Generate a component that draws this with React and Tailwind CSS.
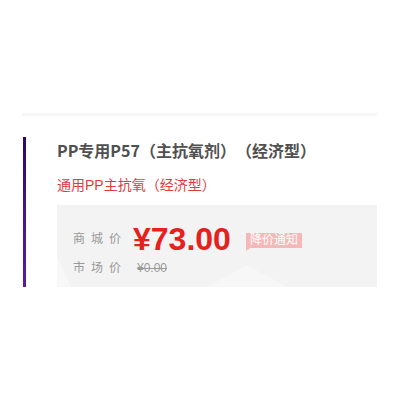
const cjk = { fontFamily: '"Liberation Sans", "Noto Sans CJK SC", sans-serif' };
const yahei = { fontFamily: '"Noto Sans CJK SC", "Liberation Sans", sans-serif' };

function App() {
  return (
    <main className="h-[400px] w-[400px] bg-white pt-[113px] [text-spacing-trim:space-all]" style={cjk}>
      <div className="ml-[22px] h-[3px] w-[355px] bg-[#f6f6f6]" />
      <section className="ml-[23px] mt-[21px] flex w-[354px]">
        <div className="w-[3px] bg-gradient-to-b from-[#2e0a5e] via-[#4a1290] to-[#5b1aa8]" />
        <div className="flex-1 pl-[31px]">
          <h1 className="mt-[2px] text-[16px] font-bold leading-[22px] text-[#505050]" style={yahei}>
            PP专用P57（主抗氧剂）（经济型）
          </h1>
          <p className="mt-[15px] text-[14px] leading-[18px] text-[#e4393c]">
            通用PP主抗氧（经济型）
          </p>
          <div className="relative mt-[11px] h-[82px] overflow-hidden bg-[#f3f3f3] pl-[16px] pt-[17px]">
            <svg className="absolute bottom-0 left-0" width="320" height="40" viewBox="0 0 320 40">
              <polygon points="0,10 14,40 0,40" fill="#f8f8f8" />
              <polygon points="150,40 190,18 230,40" fill="#f7f7f7" />
            </svg>
            <div className="relative flex items-center">
              <span className="w-[60px] text-[12px] tracking-[6px] text-[#999]">商城价</span>
              <span className="text-[32px] font-bold leading-[34px] text-[#e4211d]">¥73.00</span>
              <span className="relative ml-[15px] mt-[2px] bg-[#f5b8b8] px-[4px] text-[12px] leading-[15px] text-white">
                降价通知
                <span className="absolute -bottom-[3px] left-0 h-0 w-0 border-r-[4px] border-t-[3px] border-r-transparent border-t-[#f5b8b8]" />
              </span>
            </div>
            <div className="relative mt-[3px] flex items-center">
              <span className="w-[64px] text-[12px] tracking-[6px] text-[#999]">市场价</span>
              <span className="text-[12px] text-[#999] line-through">¥0.00</span>
            </div>
          </div>
        </div>
      </section>
    </main>
  );
}

export default App;
